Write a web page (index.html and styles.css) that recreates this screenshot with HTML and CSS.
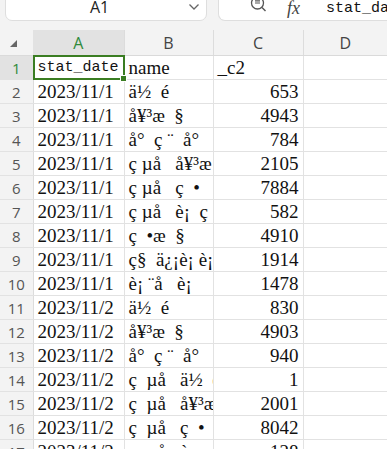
FILE: index.html
```html
<!DOCTYPE html>
<html>
<head>
<meta charset="utf-8">
<link rel="stylesheet" href="styles.css">
</head>
<body>
<div class="toolbar">
  <div class="namebox">
    <span class="ref">A1</span>
    <svg class="chev" width="12" height="8" viewBox="0 0 12 8"><path d="M1.5 1.5 L6 6 L10.5 1.5" fill="none" stroke="#666" stroke-width="1.3"/></svg>
  </div>
  <div class="fbox">
    <svg class="zoomico" width="18" height="16" viewBox="0 0 18 16"><circle cx="7.5" cy="4" r="6" fill="none" stroke="#555" stroke-width="1.3"/><path d="M5 4 H10 M5 1.8 H10" stroke="#555" stroke-width="1.2"/><path d="M12 8.5 L15.5 12" stroke="#555" stroke-width="1.4"/></svg>
    <span class="fx">fx</span>
    <span class="sep"></span>
    <span class="ftext">stat_date</span>
  </div>
</div>
<div class="gap"></div>
<table class="sheet">
  <colgroup><col class="c0"><col class="ca"><col class="cb"><col class="cc"><col class="cd"></colgroup>
  <thead>
    <tr><th class="corner"><span class="tri"></span></th><th class="sel">A</th><th>B</th><th>C</th><th>D</th></tr>
  </thead>
  <tbody>
    <tr><th class="sel">1</th><td class="mono active">stat_date</td><td>name</td><td>_c2</td><td></td></tr>
    <tr><th>2</th><td>2023/11/1</td><td>ä½  é</td><td class="num">653</td><td></td></tr>
    <tr><th>3</th><td>2023/11/1</td><td>å¥³æ  §</td><td class="num">4943</td><td></td></tr>
    <tr><th>4</th><td>2023/11/1</td><td>å°  ç ¨  å°</td><td class="num">784</td><td></td></tr>
    <tr><th>5</th><td>2023/11/1</td><td>ç µå   å¥³æ</td><td class="num">2105</td><td></td></tr>
    <tr><th>6</th><td>2023/11/1</td><td>ç µå   ç  •</td><td class="num">7884</td><td></td></tr>
    <tr><th>7</th><td>2023/11/1</td><td>ç µå   è¡  ç</td><td class="num">582</td><td></td></tr>
    <tr><th>8</th><td>2023/11/1</td><td>ç  •æ  §</td><td class="num">4910</td><td></td></tr>
    <tr><th>9</th><td>2023/11/1</td><td>ç§  ä¿¡è¡ è¡</td><td class="num">1914</td><td></td></tr>
    <tr><th>10</th><td>2023/11/1</td><td>è¡ ¨å   è¡</td><td class="num">1478</td><td></td></tr>
    <tr><th>11</th><td>2023/11/2</td><td>ä½  é</td><td class="num">830</td><td></td></tr>
    <tr><th>12</th><td>2023/11/2</td><td>å¥³æ  §</td><td class="num">4903</td><td></td></tr>
    <tr><th>13</th><td>2023/11/2</td><td>å°  ç ¨  å°</td><td class="num">940</td><td></td></tr>
    <tr><th>14</th><td>2023/11/2</td><td>ç  µå   ä½  é</td><td class="num">1</td><td></td></tr>
    <tr><th>15</th><td>2023/11/2</td><td>ç  µå   å¥³æ</td><td class="num">2001</td><td></td></tr>
    <tr><th>16</th><td>2023/11/2</td><td>ç  µå   ç  •</td><td class="num">8042</td><td></td></tr>
    <tr><th>17</th><td>2023/11/2</td><td>ç  µå   è¡</td><td class="num">128</td><td></td></tr>
  </tbody>
</table>
</body>
</html>
```
FILE: styles.css
```css
html, body {
  margin: 0;
  padding: 0;
  background: #f3f3f3;
  overflow: hidden;
  height: 449px;
}
body {
  font-family: "Liberation Serif", serif;
}
.toolbar {
  display: flex;
  height: 21px;
  padding-left: 5px;
  gap: 11px;
  overflow: hidden;
  align-items: flex-end;
}
.namebox {
  flex: 0 0 202px;
  height: 34px;
  box-sizing: border-box;
  background: #fff;
  border: 1px solid #dedede;
  border-radius: 7px;
  position: relative;
  font-family: "Open Sans", "Liberation Sans", sans-serif;
}
.ref {
  position: absolute;
  left: 84px;
  bottom: 5px;
  font-size: 16px;
  line-height: 16px;
  color: #222;
}
.chev {
  position: absolute;
  right: 6px;
  bottom: 9px;
}
.fbox {
  flex: 1 1 auto;
  height: 34px;
  box-sizing: border-box;
  background: #fff;
  border: 1px solid #dedede;
  border-right: none;
  border-radius: 7px 0 0 7px;
  display: flex;
  align-items: flex-end;
  padding-left: 31px;
  padding-bottom: 4px;
  white-space: nowrap;
  overflow: hidden;
}
.zoomico {
  flex: 0 0 auto;
  margin-bottom: 1px;
}
.fx {
  font-family: "Liberation Serif", serif;
  font-style: italic;
  font-size: 18px;
  line-height: 16px;
  color: #444;
  margin-left: 19px;
}
.sep {
  width: 1px;
  height: 18px;
  background: #ddd;
  margin-left: 16px;
  margin-bottom: -3px;
}
.ftext {
  font-family: "Liberation Mono", monospace;
  font-size: 15px;
  line-height: 15px;
  color: #111;
  margin-left: 10px;
}
.gap {
  height: 9px;
}
.sheet {
  border-collapse: collapse;
  table-layout: fixed;
  width: 387px;
  background: #fff;
}
.c0 { width: 33px; }
.ca { width: 91px; }
.cb { width: 89px; }
.cc { width: 90px; }
.cd { width: 84px; }
thead th {
  height: 25px;
  padding: 0;
  background: #f3f3f3;
  font-family: "Open Sans", "Liberation Sans", sans-serif;
  font-weight: normal;
  font-size: 16px;
  color: #444;
  border-left: 1px solid #dcdcdc;
  border-bottom: 1px solid #dadada;
  text-align: center;
  vertical-align: middle;
}
thead th.corner { border-left: none; position: relative; }
thead th.sel {
  background: #e2e2e2;
  color: #2f8a3a;
  border-left: none;
}
.tri {
  position: absolute;
  left: 10px;
  top: 10px;
  width: 0;
  height: 0;
  border-left: 7px solid transparent;
  border-bottom: 7px solid #666;
}
tbody th {
  height: 23px;
  padding: 0;
  background: #f3f3f3;
  font-family: "Open Sans", "Liberation Sans", sans-serif;
  font-weight: normal;
  font-size: 15px;
  color: #555;
  text-align: center;
  border-bottom: 1px solid #e2e2e2;
  border-right: 1px solid #dcdcdc;
}
tbody th.sel {
  background: #e2e2e2;
  color: #2f8a3a;
}
td {
  height: 23px;
  padding: 0 4px;
  font-size: 19px;
  line-height: 23px;
  color: #111;
  white-space: pre;
  overflow: hidden;
  border-right: 1px solid #e2e2e2;
  border-bottom: 1px solid #e2e2e2;
}
td.num { text-align: right; }
td.mono {
  font-family: "Liberation Mono", monospace;
  font-size: 15px;
}
td.active { position: relative; overflow: visible; }
td.active::after {
  content: "";
  position: absolute;
  left: -1px;
  top: -1px;
  right: -1px;
  bottom: -1px;
  border: 2px solid #3a7d22;
}
td.active::before {
  content: "";
  position: absolute;
  right: -3px;
  bottom: -3px;
  width: 5px;
  height: 5px;
  background: #3a7d22;
  border: 1px solid #fff;
  z-index: 2;
}
```
